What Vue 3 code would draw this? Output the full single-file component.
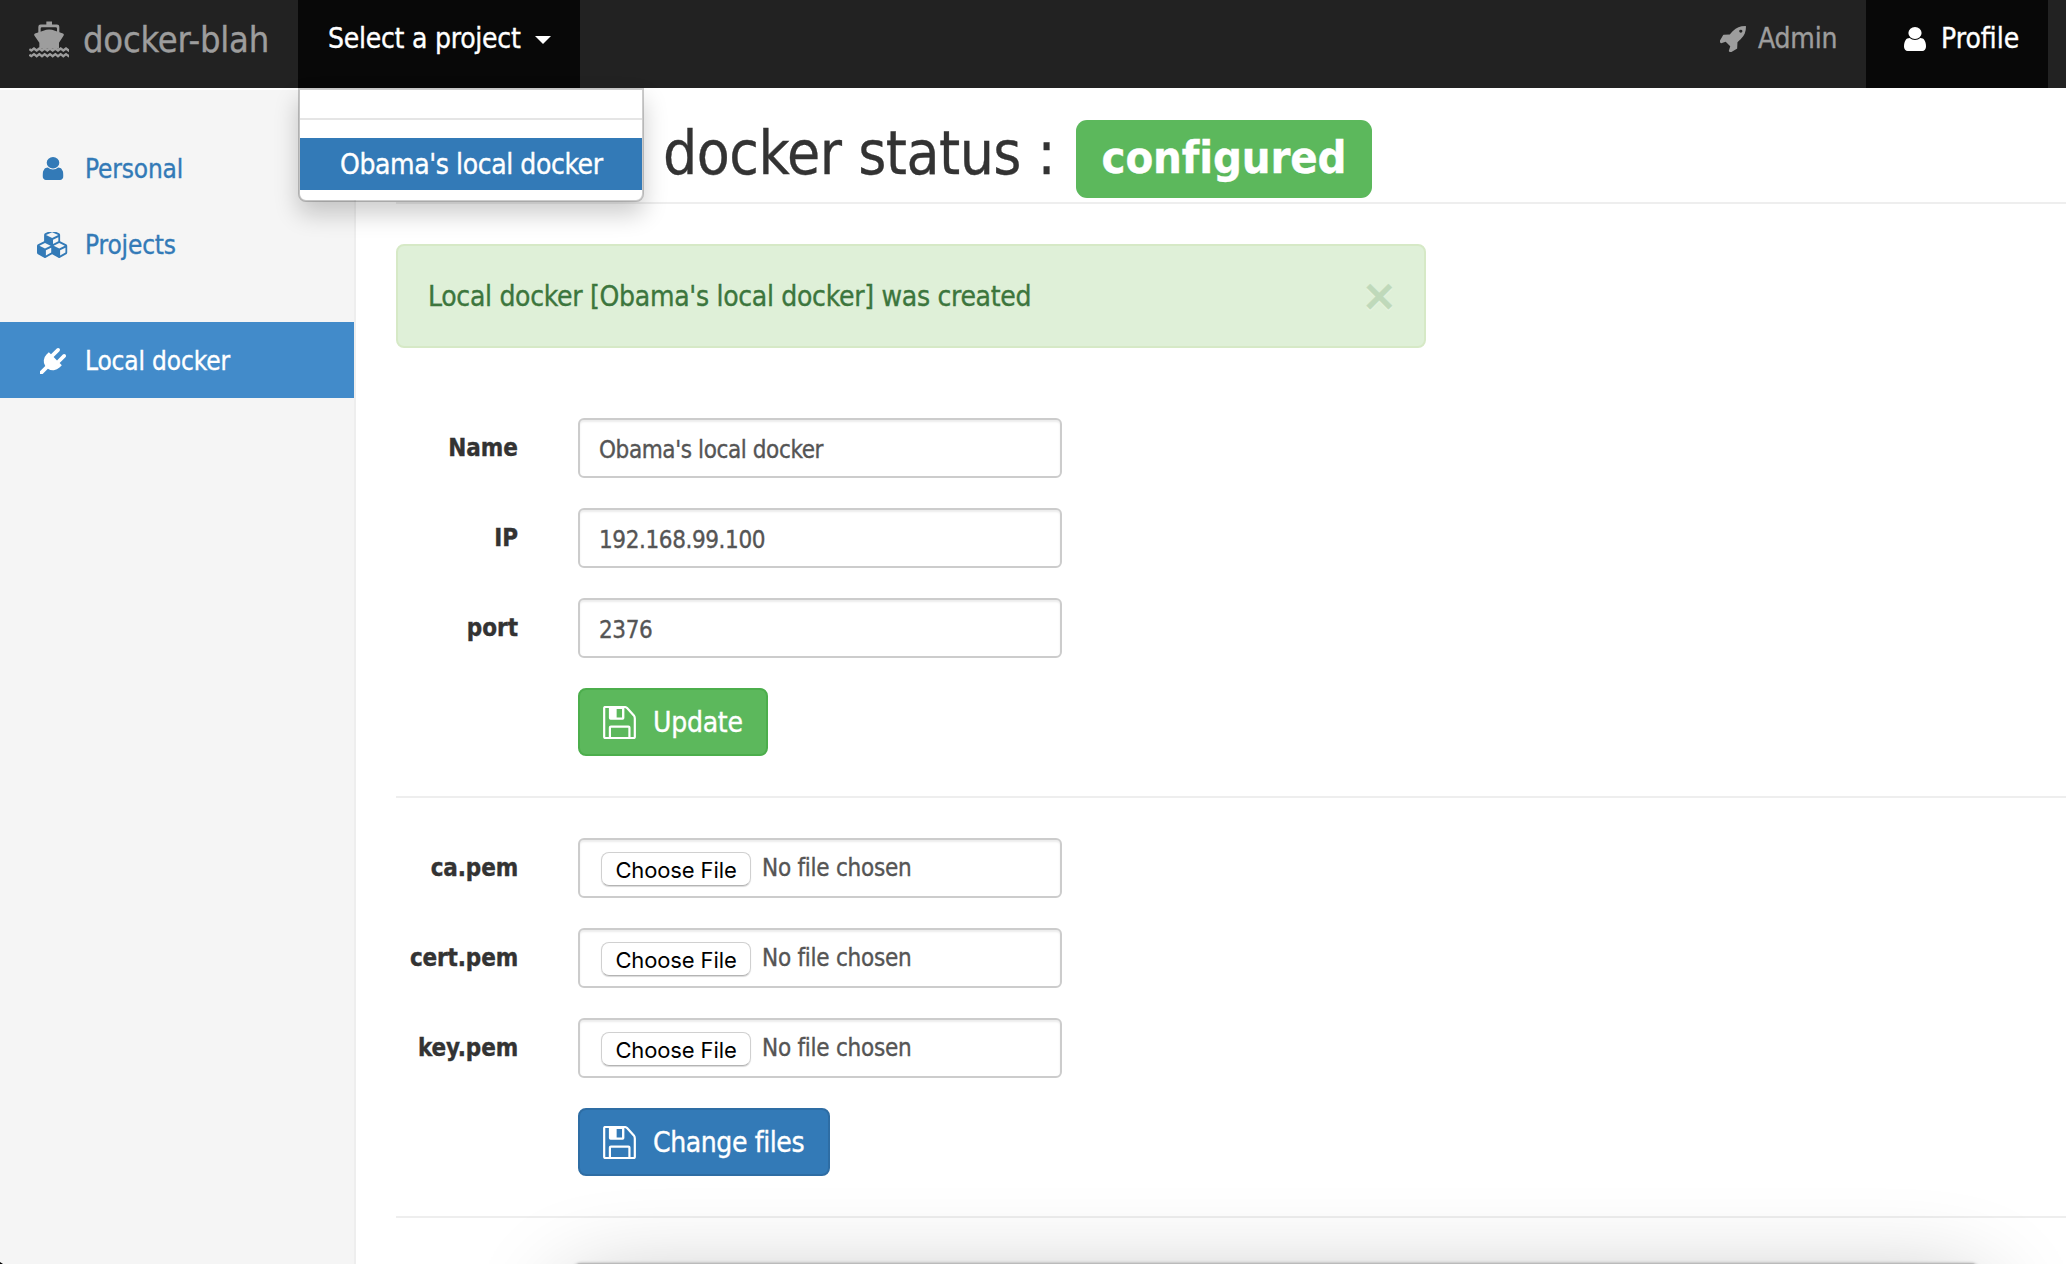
<script setup>
import { ref } from 'vue'

const userPath = 'M1536 1399q0 109-62.5 187t-150.5 78h-854q-88 0-150.5-78t-62.5-187q0-85 8.5-160.5t31.5-152 58.5-131 94-89 134.5-34.5q131 128 313 128t313-128q76 0 134.5 34.5t94 89 58.5 131 31.5 152 8.5 160.5zm-256-887q0 159-112.5 271.5t-271.5 112.5-271.5-112.5-112.5-271.5 112.5-271.5 271.5-112.5 271.5 112.5 112.5 271.5z'
const cubesPath = 'M640 1632l384-192v-314l-384 164v342zm-64-454l404-173-404-173-404 173zm1088 454l384-192v-314l-384 164v342zm-64-454l404-173-404-173-404 173zm-448-293l384-165v-266l-384 164v267zm-64-379l441-189-441-189-441 189zm1088 518v416q0 36-19 67t-52 47l-448 224q-25 14-57 14t-57-14l-448-224q-4-2-7-4-2 2-7 4l-448 224q-25 14-57 14t-57-14l-448-224q-33-16-52-47t-19-67v-416q0-38 21.5-70t56.5-48l434-186v-400q0-38 21.5-70t56.5-48l448-192q23-10 50-10t50 10l448 192q35 16 56.5 48t21.5 70v400l434 186q36 16 57 48t21 70z'
const plugPath = 'M1755 453q37 38 37 90.5t-37 90.5l-401 400 150 150-160 160q-163 163-389.5 186.5t-411.5-100.5l-362 362h-181v-181l362-362q-124-185-100.5-411.5t186.5-389.5l160-160 150 150 400-401q38-37 91-37t90 37 37 90.5-37 90.5l-400 401 234 234 401-400q38-37 91-37t90 37z'
const rocketPath = 'M1440 448q0-40-28-68t-68-28-68 28-28 68 28 68 68 28 68-28 28-68zm224-288q0 249-75.5 430.5t-253.5 360.5q-81 80-195 176l-20 379q-2 16-16 26l-384 224q-7 4-16 4-12 0-23-9l-64-64q-13-14-8-32l85-276-281-281-276 85q-3 1-9 1-14 0-23-9l-64-64q-17-19-5-39l224-384q10-14 26-16l379-20q96-114 176-195 188-187 358-258t431-71q14 0 24 9.5t10 22.5z'

const menu = [
  { label: 'Personal', path: userPath, box: '256 128 1280 1536', w: 21, h: 23 },
  { label: 'Projects', path: cubesPath, box: '0 118 2304 1674', w: 32, h: 26 },
  { label: 'Local docker', path: plugPath, box: '0 0 1792 1792', w: 26, h: 26, active: true }
]
const fields = ref([
  { label: 'Name', value: "Obama's local docker" },
  { label: 'IP', value: '192.168.99.100' },
  { label: 'port', value: '2376' }
])
const files = ['ca.pem', 'cert.pem', 'key.pem']
const actions = {
  update: 'Update',
  change: 'Change files'
}
</script>

<template>
  <div class="page">
    <header class="navbar">
      <a class="brand">
        <svg class="ship" viewBox="27 26 120 110">
          <g fill="currentColor">
            <path d="M79 27h17v9h15q7 0 7 7v20l-7-3V48q0-4-4-4H66q-4 0-4 4v12l-7 3V43q0-7 7-7h17z" />
            <path d="M70 55q17-8 35 0l24 8q4 2 2 6l-14 22v18H58V91L43 69q-2-4 2-6z" />
          </g>
          <g fill="none" stroke="currentColor" stroke-width="7">
            <path d="M28 110l6 4 8-6 8 6 8-6 8 6 8-6 8 6 8-6 8 6 8-6 8 6 8-6 8 6 8-6 8 6 6-4" />
            <path d="M28 127l6 4 8-6 8 6 8-6 8 6 8-6 8 6 8-6 8 6 8-6 8 6 8-6 8 6 8-6 8 6 6-4" />
          </g>
        </svg>
        <span>docker-blah</span>
      </a>
      <div class="picker">
        <a class="toggle">Select a project<i class="caret"></i></a>
        <div class="dropdown">
          <div class="divider"></div>
          <a class="option">Obama's local docker</a>
        </div>
      </div>
      <nav class="right">
        <a class="admin">
          <svg width="26" height="26" viewBox="64 128 1600 1600"><path fill="currentColor" :d="rocketPath" /></svg>
          <span>Admin</span>
        </a>
        <a class="profile">
          <svg width="22" height="24" viewBox="256 128 1280 1536" preserveAspectRatio="none"><path fill="currentColor" :d="userPath" /></svg>
          <span>Profile</span>
        </a>
      </nav>
    </header>

    <div class="body">
      <aside class="sidebar">
        <a v-for="m in menu" :key="m.label" class="item" :class="{ active: m.active }">
          <span class="glyph">
            <svg :width="m.w" :height="m.h" :viewBox="m.box" preserveAspectRatio="none"><path fill="currentColor" :d="m.path" /></svg>
          </span>
          <span>{{ m.label }}</span>
        </a>
      </aside>

      <main class="content">
        <h1 class="title"><span class="status">docker status :</span><span class="badge">configured</span></h1>

        <div class="alert">
          <span>Local docker [Obama's local docker] was created</span>
          <span class="close">×</span>
        </div>

        <form class="form">
          <div v-for="f in fields" :key="f.label" class="row">
            <label>{{ f.label }}</label>
            <div class="control text">{{ f.value }}</div>
          </div>
          <a class="btn success">
            <svg width="33" height="33" viewBox="41 48 97 98"><g fill="none" stroke="currentColor" stroke-width="6.5"><path d="M47 51h57q5 0 8 3l20 22q3 4 3 9v55q0 3-3 3H47q-3 0-3-3V54q0-3 3-3z" /><path d="M61 142v-30q0-3 3-3h52q3 0 3 3v30" /></g><path fill="currentColor" fill-rule="evenodd" d="M58 50h46v34q0 5-5 5H63q-5 0-5-5zM81 57v25h16V57z" /></svg>
            <span>{{ actions.update }}</span>
          </a>
        </form>

        <hr />

        <form class="form second">
          <div v-for="f in files" :key="f" class="row">
            <label class="file-label">{{ f }}</label>
            <div class="control">
              <span class="choose">Choose File</span>
              <span class="empty">No file chosen</span>
            </div>
          </div>
          <a class="btn primary">
            <svg width="33" height="33" viewBox="41 48 97 98"><g fill="none" stroke="currentColor" stroke-width="6.5"><path d="M47 51h57q5 0 8 3l20 22q3 4 3 9v55q0 3-3 3H47q-3 0-3-3V54q0-3 3-3z" /><path d="M61 142v-30q0-3 3-3h52q3 0 3 3v30" /></g><path fill="currentColor" fill-rule="evenodd" d="M58 50h46v34q0 5-5 5H63q-5 0-5-5zM81 57v25h16V57z" /></svg>
            <span>{{ actions.change }}</span>
          </a>
        </form>

        <hr />
      </main>
    </div>

    <div class="window-below"></div>
    <div class="corner"></div>
  </div>
</template>

<style>
body {
  margin: 0;
  background: #fff;
}
</style>

<style scoped>
* {
  box-sizing: border-box;
}
.page {
  position: relative;
  height: 1264px;
  overflow: hidden;
  display: flex;
  flex-direction: column;
  background: #fff;
  color: #333;
  font-family: 'DejaVu Sans Condensed', 'DejaVu Sans', sans-serif;
  font-size: 28px;
  -webkit-text-stroke: 0.35px currentColor;
}
svg {
  flex: none;
  display: block;
}
.navbar {
  flex: none;
  height: 88px;
  display: flex;
  background: #222;
  color: #9d9d9d;
}
.brand {
  width: 298px;
  height: 79px;
  padding-left: 29px;
  display: flex;
  align-items: center;
  font-size: 36px;
  letter-spacing: -0.2px;
}
.ship {
  width: 40px;
  height: 37px;
  margin-right: 14px;
}
.picker {
  position: relative;
  width: 282px;
  height: 88px;
  background: #080808;
  color: #fff;
}
.toggle {
  height: 77px;
  padding-left: 30px;
  display: flex;
  align-items: center;
  letter-spacing: -0.25px;
}
.caret {
  margin: 3px 0 0 14px;
  border: 8px solid transparent;
  border-top-color: #fff;
  border-bottom: 0;
}
.dropdown {
  position: absolute;
  z-index: 5;
  top: 88px;
  left: 0;
  width: 346px;
  height: 114px;
  padding-top: 28px;
  background: #fff;
  background-clip: padding-box;
  border: 2px solid rgba(0, 0, 0, 0.2);
  border-radius: 0 0 8px 8px;
  box-shadow: 0 12px 24px rgba(0, 0, 0, 0.2);
}
.divider {
  height: 2px;
  margin-bottom: 18px;
  background: #e5e5e5;
}
.option {
  height: 52px;
  padding-left: 40px;
  display: flex;
  align-items: center;
  white-space: nowrap;
  background: #337ab7;
  color: #fff;
  letter-spacing: -0.4px;
}
.right {
  margin-left: auto;
  margin-right: 18px;
  display: flex;
}
.admin,
.profile {
  height: 88px;
  padding-bottom: 11px;
  display: flex;
  align-items: center;
}
.admin {
  width: 146px;
  gap: 12px;
  letter-spacing: -0.2px;
}
.profile {
  width: 182px;
  padding-left: 38px;
  gap: 15px;
  background: #080808;
  color: #fff;
}
.body {
  flex: 1;
  display: flex;
  margin-top: 2px;
}
.sidebar {
  flex: none;
  width: 356px;
  padding-top: 40px;
  background: #f5f5f5;
  border-right: 2px solid #eee;
  color: #337ab7;
  font-size: 26px;
  letter-spacing: -0.15px;
}
.item {
  height: 76px;
  padding: 1px 0 0 32px;
  display: flex;
  align-items: center;
}
.item > span:last-child {
  margin-top: 1px;
}
.glyph {
  width: 53px;
  display: flex;
}
.glyph svg {
  margin-left: 20.5px;
  transform: translateX(-50%);
}
.item.active {
  margin-top: 40px;
  background: #428bca;
  color: #fff;
}
.content {
  flex: 1;
  padding-left: 40px;
}
.title {
  height: 114px;
  margin: 0 0 40px;
  padding-left: 267px;
  display: flex;
  align-items: flex-start;
  border-bottom: 2px solid #eee;
  font-size: 60px;
  font-weight: 400;
}
.status {
  width: 413px;
  margin-top: 23px;
  line-height: 80px;
  letter-spacing: -0.5px;
  white-space: nowrap;
}
.badge {
  width: 296px;
  height: 78px;
  margin-top: 30px;
  border-radius: 11px;
  background: #5cb85c;
  color: #fff;
  font-size: 45px;
  font-weight: 700;
  line-height: 76px;
  letter-spacing: -0.15px;
  text-align: center;
}
.alert {
  width: 1030px;
  height: 104px;
  padding: 0 31px 0 30px;
  display: flex;
  align-items: center;
  justify-content: space-between;
  border: 2px solid #d6e9c6;
  border-radius: 8px;
  background: #dff0d8;
  color: #3c763d;
  letter-spacing: -0.3px;
}
.close {
  width: 28px;
  height: 44px;
  margin-top: -2px;
  display: flex;
  align-items: center;
  justify-content: center;
  color: #bfd9ba;
  text-shadow: 0 2px 0 #e5f3df;
  font: 700 43px 'DejaVu Sans', sans-serif;
}
.form {
  margin-top: 70px;
}
.form.second {
  margin-top: 40px;
}
.row {
  display: flex;
  align-items: center;
  margin-bottom: 30px;
}
.row label {
  width: 122px;
  margin-right: 60px;
  text-align: right;
  font-size: 24px;
  font-weight: 700;
}
.row .file-label {
  letter-spacing: -0.15px;
}
.control {
  width: 484px;
  height: 60px;
  padding: 0 21px;
  display: flex;
  align-items: center;
  border: 2px solid #ccc;
  border-radius: 6px;
  box-shadow: inset 0 2px 2px rgba(0, 0, 0, 0.075);
  color: #555;
  font-size: 24px;
}
.control.text {
  padding-top: 3px;
  padding-left: 19px;
  letter-spacing: -0.4px;
}
.choose {
  width: 150px;
  height: 34px;
  margin: 2px 11px 0 0;
  border: 1px solid #d0d0d0;
  border-bottom-color: #b4b4b4;
  border-radius: 8px;
  box-shadow: 0 1px 1px rgba(0, 0, 0, 0.15);
  color: #000;
  font: 22px/34px Inter, sans-serif;
  letter-spacing: -0.12px;
  text-align: center;
  -webkit-text-stroke: 0;
}
.empty {
  letter-spacing: -0.25px;
}
.btn {
  width: 190px;
  height: 68px;
  margin-left: 182px;
  padding-left: 23px;
  display: flex;
  align-items: center;
  gap: 17px;
  border: 2px solid #4cae4c;
  border-radius: 8px;
  background: #5cb85c;
  color: #fff;
  letter-spacing: -0.25px;
}
.btn.primary {
  width: 252px;
  border-color: #2e6da4;
  background: #337ab7;
  letter-spacing: -0.4px;
}
hr {
  height: 2px;
  margin: 40px 0 0;
  border: 0;
  background: #eee;
}
.window-below {
  position: absolute;
  left: 573px;
  top: 1263px;
  width: 1406px;
  height: 400px;
  border-radius: 8px;
  background: #bbb;
  box-shadow: 0 0 3px rgba(0, 0, 0, 0.3), 0 30px 100px rgba(0, 0, 0, 0.32);
}
.corner {
  position: absolute;
  left: 0;
  bottom: 0;
  border-left: 3px solid #000;
  border-top: 2px solid transparent;
}
</style>
